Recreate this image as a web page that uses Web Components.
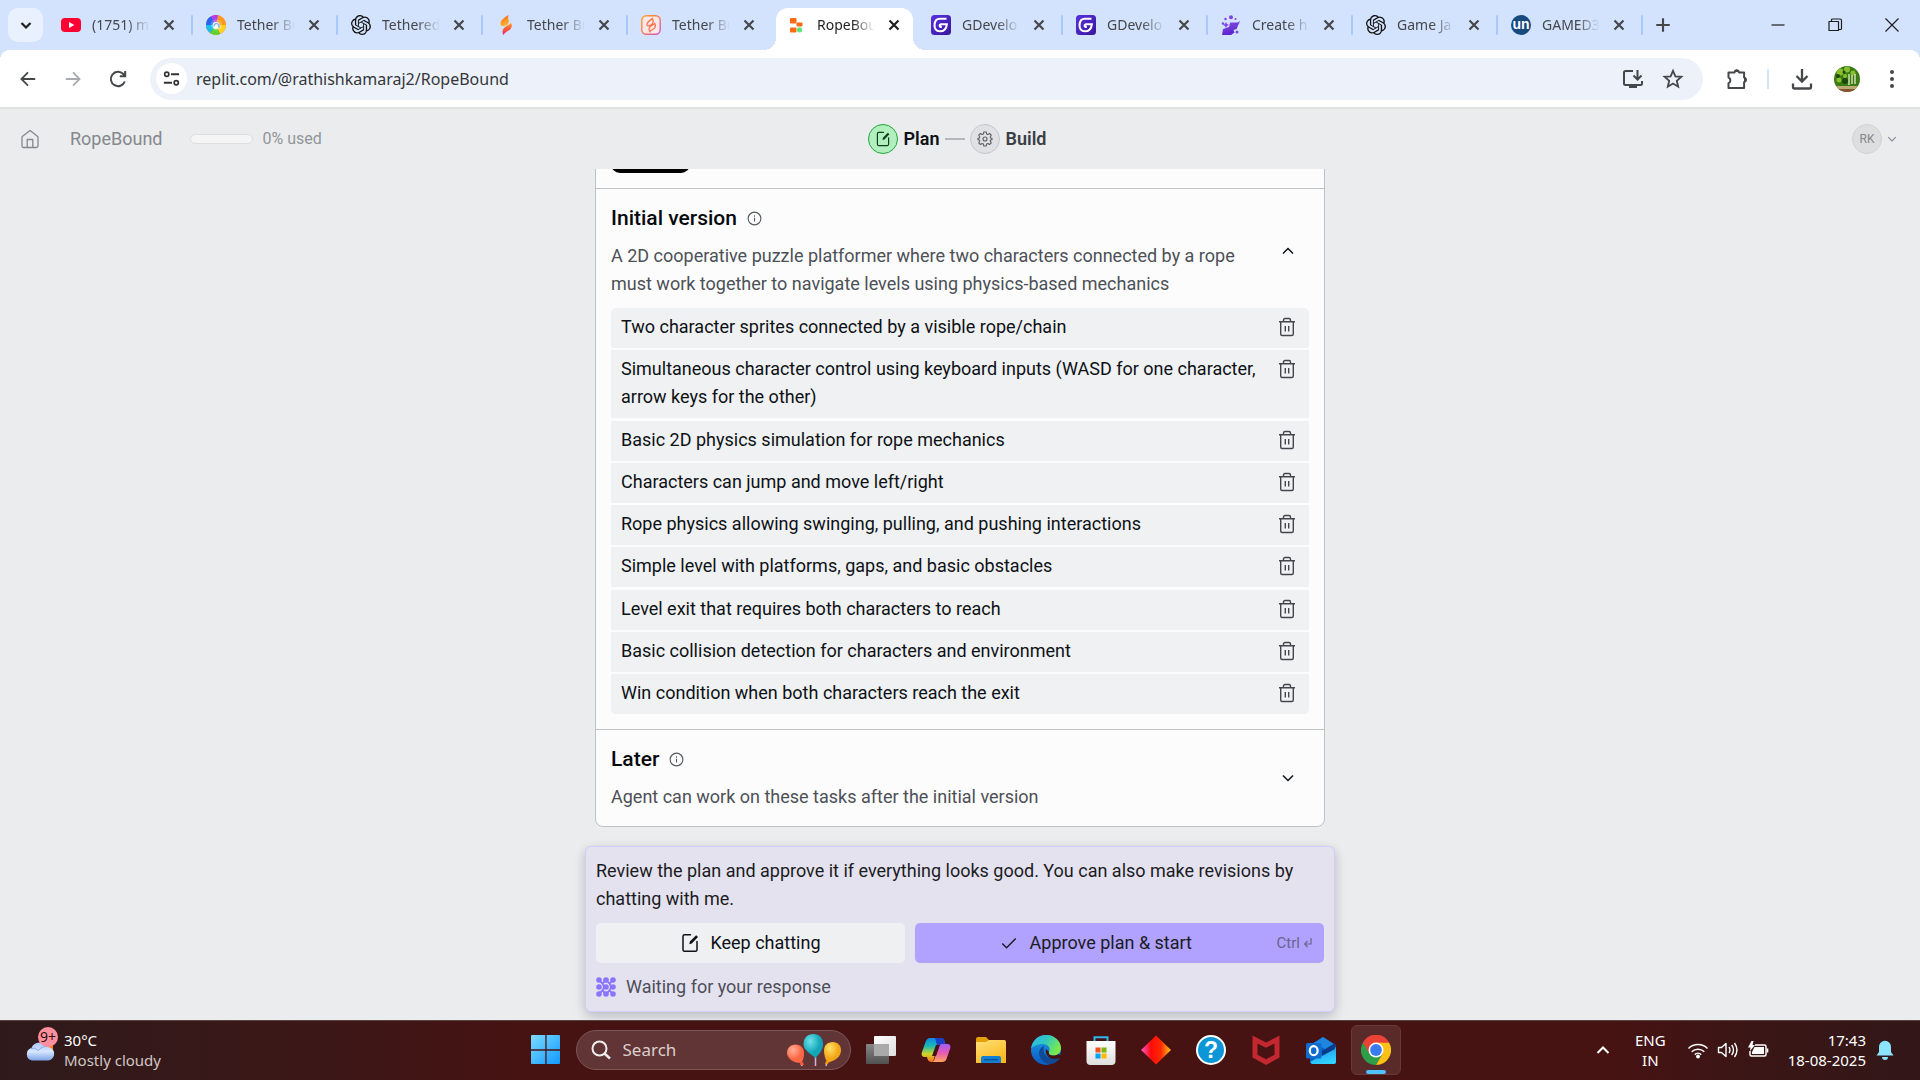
<!DOCTYPE html>
<html lang="en">
<head>
<meta charset="utf-8">
<title>RopeBound</title>
<style>
html,body{margin:0;height:100%;overflow:hidden}
body{--ui:"Noto Sans","Open Sans",sans-serif;--app:"Roboto","Noto Sans",sans-serif;font-family:var(--app);color:#0e1116;background:#eaecee}
</style>
</head>
<body>
<desktop-screen></desktop-screen>
<script>
const BASE = `*{box-sizing:border-box}button{font:inherit;color:inherit;background:none;border:0;padding:0;margin:0;cursor:pointer}
:host{display:block}button{display:flex;align-items:center;justify-content:center}input{font:inherit;border:0;outline:0;background:none;padding:0;min-width:0}`;
function define(name, html, css, setup) {
  const template = document.createElement('template');
  template.innerHTML = `<style>${BASE}${css}</style>${html}`;
  customElements.define(name, class extends HTMLElement {
    constructor() {
      super();
      this.attachShadow({ mode: 'open' }).append(template.content.cloneNode(true));
    }
    connectedCallback() { if (setup) setup(this, this.shadowRoot); }
  });
}

const openai = `<path fill="#111" d="M22.2819 9.8211a5.9847 5.9847 0 0 0-.5157-4.9108 6.0462 6.0462 0 0 0-6.5098-2.9A6.0651 6.0651 0 0 0 4.9807 4.1818a5.9847 5.9847 0 0 0-3.9977 2.9 6.0462 6.0462 0 0 0 .7427 7.0966 5.98 5.98 0 0 0 .511 4.9107 6.051 6.051 0 0 0 6.5146 2.9001A5.9847 5.9847 0 0 0 13.2599 24a6.0557 6.0557 0 0 0 5.7718-4.2058 5.9894 5.9894 0 0 0 3.9977-2.9001 6.0557 6.0557 0 0 0-.7475-7.0729zm-9.022 12.6081a4.4755 4.4755 0 0 1-2.8764-1.0408l.1419-.0804 4.7783-2.7582a.7948.7948 0 0 0 .3927-.6813v-6.7369l2.02 1.1686a.071.071 0 0 1 .038.052v5.5826a4.504 4.504 0 0 1-4.4945 4.4944zm-9.6607-4.1254a4.4708 4.4708 0 0 1-.5346-3.0137l.142.0852 4.783 2.7582a.7712.7712 0 0 0 .7806 0l5.8428-3.3685v2.3324a.0804.0804 0 0 1-.0332.0615L9.74 19.9502a4.4992 4.4992 0 0 1-6.1408-1.6464zM2.3408 7.8956a4.485 4.485 0 0 1 2.3655-1.9728V11.6a.7664.7664 0 0 0 .3879.6765l5.8144 3.3543-2.0201 1.1685a.0757.0757 0 0 1-.071 0l-4.8303-2.7865A4.504 4.504 0 0 1 2.3408 7.872zm16.5963 3.8558L13.1038 8.364 15.1192 7.2a.0757.0757 0 0 1 .071 0l4.8303 2.7913a4.4944 4.4944 0 0 1-.6765 8.1042v-5.6772a.79.79 0 0 0-.407-.667zm2.0107-3.0231l-.142-.0852-4.7735-2.7818a.7759.7759 0 0 0-.7854 0L9.409 9.2297V6.8974a.0662.0662 0 0 1 .0284-.0615l4.8303-2.7866a4.4992 4.4992 0 0 1 6.6802 4.66zM8.3065 12.863l-2.02-1.1638a.0804.0804 0 0 1-.038-.0567V6.0742a4.4992 4.4992 0 0 1 7.3757-3.4537l-.142.0805L8.704 5.459a.7948.7948 0 0 0-.3927.6813zm1.0976-2.3654l2.602-1.4998 2.6069 1.4998v2.9994l-2.5974 1.4997-2.6067-1.4997Z"/>`;
const line = (d, w = 2, extra = '') => `<path d="${d}" fill="none" stroke="currentColor" stroke-width="${w}" ${extra}/>`;
const grad = (id, stops, x2 = 0, y2 = 1) => `<linearGradient id="${id}" x1="0" y1="0" x2="${x2}" y2="${y2}">${stops.map((c, i) => `<stop offset="${i / (stops.length - 1)}" stop-color="${c}"/>`).join('')}</linearGradient>`;

/* name: [viewBox width, viewBox height, markup] */
const ICONS = {
  youtube: [20, 20, `<rect y="3" width="20" height="14" rx="4" fill="#ff0033"/><path d="M8 7l5.400 3L8 13z" fill="#fff"/>`],
  swirl: [20, 20, `<circle cx="10" cy="10" r="10" fill="#f54"/><path d="M10 0a10 10 0 0 1 10 10h-10z" fill="#ff9a1c"/><path d="M20 10a10 10 0 0 1-6 9L10 10z" fill="#ffd21f"/><path d="M14 19a10 10 0 0 1-10-1l6-8z" fill="#5ed32c"/><path d="M4 18a10 10 0 0 1-4-9l10 1z" fill="#19bfe8"/><path d="M0 10A10 10 0 0 1 5 1.300L10 10z" fill="#2563f5"/><path d="M5 1.300A10 10 0 0 1 12 .2L10 10z" fill="#b13cf2"/><path d="M5 7A6.500 6.500 0 0 1 14.500 6a6 6 0 0 1-2 9.500A6.500 6.500 0 0 1 5 7z" fill="#fff" opacity=".22"/><circle cx="10" cy="10.500" r="3.400" fill="#fff"/><path d="M8 11.500a2.500 2.500 0 1 1 4.500 1" stroke="#79b8ff" fill="none" stroke-width="1.400"/>`],
  openai: [24, 24, openai],
  flame: [20, 20, `<defs>${grad('g', ['#ff3b2f', '#ff8a1e', '#ffb12e'], .3, 1)}${grad('h', ['#ff9d1c', '#ff5a3c', '#f01f7a'], 0, 1)}</defs><path d="M12.500 0C8 2.500 4 6 4.500 9c.3 2.500 2.500 2.500 5.500 1.500 3-1.200 3-4 2.500-5.500-.4-1.600-.7-3.200 0-5z" fill="url(#g)"/><path d="M7.500 20c-1.500-2-1.500-5 1-7.500 2-2 5-2.500 6.500-4.500 1.500 2 1 5-1.500 7-2.500 1.500-5 2.500-6 5z" fill="url(#h)"/>`],
  flameBox: [20, 20, `<defs>${grad('g', ['#ffa02c', '#ff7550', '#d152d0'], 1, 1)}</defs><rect x=".8" y=".8" width="18.400" height="18.400" rx="4.500" fill="#fbe9e7" stroke="url(#g)" stroke-width="1.400"/><path d="M11.500 3.500C8 6 5.500 7.500 6 10c.5 1.500 3 .5 4.500-.3 1.800-1 2-3.500 1-6.200zM9 16.800c-2-2.500-.7-5 1.200-6 1.500-.8 3-1.300 3.600-2.300 1 2 .5 4-1 5.300-1.500 1-3.200 1.500-3.800 3z" fill="none" stroke="#f8744d" stroke-width="1.300"/>`],
  replit: [20, 20, `<g fill="#fd6a13"><rect x="4" y="3" width="6.500" height="5.500" rx="1"/><rect x="10.500" y="7.500" width="6" height="4" rx="1"/><rect x="4" y="12.500" width="6.500" height="5" rx="1"/></g><circle cx="13.500" cy="14.800" r="2.600" fill="#5be37d"/>`],
  gdevelop: [20, 20, `<defs>${grad('g', ['#5a31e2', '#38159a'], 1, 1)}</defs><rect width="20" height="20" rx="3.500" fill="url(#g)"/><path d="M15.500 3.800H8.800C5.800 3.800 4 6 3.600 9c-.6 4.500 1.500 7.300 5.400 7.300 3.700 0 6.300-2.300 6.800-7H10c-1.600 0-2.200 2.600.8 2.600" fill="none" stroke="#fff" stroke-width="2.100"/>`],
  wizard: [20, 20, `<defs>${grad('g', ['#8b52ee', '#5a22c8'], .4, 1)}</defs><path d="M1 20l1-6 6-2 1-4.500h7.500L19 6l-3.500 8-3 1 1 2.500L10 20z" fill="url(#g)"/><g fill="#7d43e8"><circle cx="10" cy="2.200" r="2"/><circle cx="4.500" cy="4" r="1.200"/><circle cx="14.500" cy="4" r="1"/><circle cx="2" cy="8.500" r="1.300"/><circle cx="16" cy="17" r="1.500"/><path d="M5 7l1 2 2 1-2 1-1 2-1-2-2-1 2-1z"/></g>`],
  un: [20, 20, `<circle cx="10" cy="10" r="10" fill="#174a7e"/><text x="10" y="14" text-anchor="middle" font-family="Liberation Sans,sans-serif" font-weight="700" font-size="14" fill="#fff">un</text>`],
  close: [16, 16, line('M4 4l8 8M12 4l-8 8', 1.900)],
  plus: [16, 16, line('M8 2v12M2 8h12', 1.900)],
  down: [16, 16, line('M3.500 6L8 10.500 12.500 6', 2.200)],
  chevDown: [16, 16, line('M3 5.500l5 5 5-5', 1.500)],
  chevUp: [16, 16, line('M3 10.500l5-5 5 5', 1.500)],
  minimize: [16, 16, line('M1.500 8h13', 1.200)],
  restore: [16, 16, line('M2 4.500h9.500v9H2zM4.500 4V3q0-1 1-1h7.500q1.500 0 1.500 1.500v8q0 1-1 1h-1.500', 1.200, 'stroke-linejoin="round"')],
  winclose: [16, 16, line('M1.500 1.500l13 13M14.500 1.500l-13 13', 1.200)],
  back: [20, 20, line('M18 10H3M10 2.700L2.700 10l7.300 7.300', 2)],
  forward: [20, 20, line('M2 10h15M10 2.700l7.300 7.300-7.300 7.300', 2)],
  reload: [20, 20, line('M16.800 12.500A7.200 7.200 0 1 1 15.300 5L17 6.800M17.200 2v5.300h-5.400', 2)],
  tune: [20, 20, line('M9.500 5.500H18M2 14.500h8.500', 2) + `<circle cx="5" cy="5.500" r="2.200" fill="none" stroke="currentColor" stroke-width="1.800"/><circle cx="15" cy="14.500" r="2.200" fill="none" stroke="currentColor" stroke-width="1.800"/>`],
  install: [22, 22, line('M11 3H3.500Q2 3 2 4.500v11Q2 17 3.500 17h15q1.500 0 1.500-1.500V13M15.500 2v9M11.500 7.500l4 4 4-4', 2) + `<path d="M7 17h8v3H7z" fill="currentColor"/>`],
  star: [22, 22, line('M11 2.800l2.400 5.500 6 .5-4.600 4 1.400 5.900-5.200-3.200-5.200 3.200 1.400-5.900-4.600-4 6-.5z', 1.800)],
  puzzle: [24, 24, `<path d="M3.500 5.500h6a2.400 2.400 0 0 1 4.600 0h5v5a2.400 2.400 0 0 1 0 4.600v6H3.500v-5a3 3 0 0 0 0-5.600z" fill="none" stroke="currentColor" stroke-width="2" stroke-linejoin="round"/><path d="M9 5a2.700 2.700 0 0 1 5.400 0zM19 10a2.700 2.700 0 0 1 0 5.400z" fill="currentColor"/>`],
  download: [24, 24, line('M12 2v12M6.500 9l5.500 5.500L17.500 9M3 16.500V20q0 1.500 1.500 1.500h15Q21 21.500 21 20v-3.500', 2.300)],
  avatar: [26, 26, `<defs><clipPath id="c"><circle cx="13" cy="13" r="13"/></clipPath></defs><g clip-path="url(#c)"><path fill="#3b7a14" d="M0 0h26v26H0z"/><g fill="#89bf2c"><circle cx="6" cy="6" r="3.500"/><circle cx="13" cy="3.500" r="3"/><circle cx="19" cy="7" r="2.500"/><circle cx="5" cy="14" r="2.500"/><circle cx="11" cy="10" r="2"/></g><g fill="#1c480d"><circle cx="10" cy="6" r="1.500"/><circle cx="4" cy="10" r="2"/><circle cx="11" cy="15" r="3"/></g><path d="M15 8v11M18 9v9M21 8v10" stroke="#dbe8b9" stroke-width="1.400"/><path d="M2 20h24v3H2z" fill="#bcab76"/><path d="M4 23h18v4H4z" fill="#86552e"/></g>`],
  dots: [20, 20, `<g fill="currentColor"><circle cx="10" cy="3" r="2"/><circle cx="10" cy="10" r="2"/><circle cx="10" cy="17" r="2"/></g>`],
  home: [20, 20, line('M2 8.500Q2 7.800 2.600 7.200L10 1.500l7.400 5.700q.6.600.6 1.300V17q0 1.500-1.500 1.500h-13Q2 18.500 2 17zM7.200 18.500v-8h5.600v8', 1.300, 'stroke-linejoin="round"')],
  edit: [20, 20, line('M10.500 1.800H4.500q-1.500 0-1.500 1.500v13.400q0 1.500 1.500 1.500h11q1.500 0 1.500-1.500V8.500', 1.500, 'stroke-linecap="round"') + `<path d="M9.300 11.200l.6-2.800 6.200-6.200 1.900 1.900-6.200 6.500z" fill="currentColor"/>`],
  gear: [20, 20, line('M8.500 1.300h3l.5 2.400 1.500.7 2.200-1.300 2.100 2.100-1.300 2.200.6 1.500 1.600.1v2l-1.600.1-.6 1.500 1.300 2.200-2.100 2.100-2.200-1.300-1.500.7-.5 2.400h-3L8 16.300l-1.500-.7-2.200 1.300-2.100-2.100 1.300-2.200-.7-1.500-1.600-.1V9l1.600-.1.7-1.500-1.300-2.200 2.100-2.100 2.200 1.300L8 3.700z', 1.400, 'stroke-linejoin="round"') + `<circle cx="10" cy="10" r="2.500" fill="none" stroke="currentColor" stroke-width="1.400"/>`],
  info: [16, 16, `<circle cx="8" cy="8" r="6.800" fill="none" stroke="currentColor" stroke-width="1.200"/>` + line('M8 7.200v4M8 4.600v1.400', 1.200)],
  trash: [20, 20, line('M2 4.800h16M6.500 4.800V3q0-1.500 1.500-1.500h4q1.500 0 1.500 1.500v1.800M3.700 4.800V17q0 1.500 1.500 1.500h9.600q1.500 0 1.500-1.500V4.800M8.300 9v5.500M11.700 9v5.500', 1.400)],
  check: [20, 20, line('M2.500 10.500l4.800 4.800L17.500 5', 1.600)],
  enter: [10, 12, line('M8 1v6H2M4.500 4L1.700 7l2.800 3', 1.200)],
  agent: [20, 20, `<g fill="#8b74ff">${[3, 10, 17].map(x => [3, 10, 17].map(y => `<circle cx="${x}" cy="${y}" r="2.800"/>`).join('')).join('')}</g><path d="M3 3l3.500 3.500L8 10l-1.500 3.500L3 17M10 3l3.500 3.500L15 10l-1.500 3.500L10 17M10 3L6.500 6.500M10 17l-3.500-3.500M17 3l-3 3M17 17l-3-3" stroke="#8b74ff" stroke-width="1.800" fill="none"/>`],
  cloud: [30, 20, `<defs>${grad('g', ['#a9c8fa', '#d7e7ff', '#7ea4e8'])}</defs><path d="M21 4h7v7h-7z" fill="#ff7a18"/><path d="M7 19.500a6.500 6.500 0 0 1-.5-12.600A9 9 0 0 1 22.500 6 6.800 6.800 0 0 1 23.500 19.500z" fill="url(#g)"/><path d="M5 7.500q5-1.500 8.500 2 3-4.500 9-4" fill="none" stroke="#84a8e8"/>`],
  start: [30, 30, `<defs>${grad('g', ['#7ddcff', '#1099ff'], 1, 1)}</defs><path fill="url(#g)" d="M0 1q0-1 1-1h13.300v14.300H0zM15.600 0H28q1 0 1 1v13.300H15.600zM0 15.700h14.300V29H1q-1 0-1-1zM15.600 15.700H29V28q0 1-1 1H15.600z"/>`],
  search: [20, 20, `<circle cx="8.500" cy="8.500" r="7" fill="none" stroke="currentColor" stroke-width="2"/>` + line('M13.500 13.500l5.500 5', 2.400)],
  balloons: [56, 34, `<defs><radialGradient id="a" cx=".35" cy=".3"><stop offset="0" stop-color="#ffb09a"/><stop offset="1" stop-color="#ff6844"/></radialGradient><radialGradient id="b" cx=".35" cy=".3"><stop offset="0" stop-color="#6fe3ea"/><stop offset="1" stop-color="#12a5b8"/></radialGradient><radialGradient id="d" cx=".35" cy=".3"><stop offset="0" stop-color="#ffe268"/><stop offset="1" stop-color="#f4a618"/></radialGradient></defs><path d="M29.500 24v9M15 29l1 4M41 29l-1 4" stroke="#d0b4d8" stroke-width="1.500"/><path d="M1 20c0-5 3.500-8.500 8.500-8.500S18 15 18 20c0 4-1 8-3 10C7 30 1 25 1 20z" fill="url(#a)"/><path d="M17.500 11.500C17.500 5 21.500 1 27.500 1S37 5 37 11.500c0 6-5 10.500-7.500 13.500-3-3-12-7.500-12-13.500z" fill="url(#b)"/><path d="M38 17.500c0-5 3.500-8.500 8.700-8.500S55 12.500 55 17.500C55 24 48 28.500 41.500 29.500 39 26 38 21.500 38 17.500z" fill="url(#d)"/><path d="M14 29h3l1 3h-4z" fill="#f05a38"/><path d="M40 28h3l-1 3h-3z" fill="#e89a10"/>`],
  taskview: [30, 30, `<defs>${grad('g', ['#fff', '#ddd'], 1, 1)}${grad('h', ['#888', '#505050'])}</defs><rect y="9" width="23" height="20" rx="1" fill="url(#h)"/><rect x="8" y="1" width="22" height="20" rx="1" fill="url(#g)"/><path d="M8 9h15v12H8z" fill="#aaa"/>`],
  copilot: [30, 30, `<defs>${grad('g', ['#1287e8', '#18b9b5', '#d0d824', '#ff6a22'])}${grad('h', ['#a35df8', '#e85bb2', '#ffa45c'])}</defs><path d="M9 3h11q2.500 0 3.500 3l1 3h-5q-2 0-3 3l-4 13q-.7 2-2 2-3 0-4-3l-.5-2H4c-3 0-4-2-3-5L4.500 7Q6 3 9 3z" fill="url(#g)"/><path d="M14 3h6q2.500 0 3.500 3l1 3h-5q-2 0-3 3z" fill="#1b3fc8"/><path d="M21 27H11q2-1 2.500-3l4-12q1-3 3.500-3h5c3 0 4 2 3 5l-3.500 10q-1 3-4.500 3z" fill="url(#h)"/><path d="M15 10h4l-4 11h-4z" fill="#461212"/>`],
  folder: [30, 30, `<defs>${grad('g', ['#ffe07a', '#fbb91f'], .6, 1)}</defs><path d="M0 4q0-2 2-2h8l3 3h16v8H0z" fill="#e3a008"/><path d="M0 7h10l3-2h15q2 0 2 2v21H0z" fill="url(#g)"/><path d="M5 28v-5q0-2 2-2h16q2 0 2 2v5z" fill="#1180d4"/><path d="M8 24.700h14" stroke="#0a4f94" stroke-width="1.300"/>`],
  edge: [30, 30, `<defs>${grad('g', ['#2bb3ee', '#32c8c0', '#7bea4a'], 1, .5)}${grad('h', ['#1b9de8', '#0c59c0'])}</defs><circle cx="15" cy="15" r="15" fill="url(#h)"/><path d="M0 13.500C1.500 5 7.500 0 15 0c9 0 15 6.500 15 13 0 4.500-3 7.500-7.500 7.500-3.500 0-5.500-1.500-4.500-3.500 2-4-1-8-6-8-5 0-9 1.500-12 4.500z" fill="url(#g)"/><path d="M13 11c-5 2-6 7-4 11 2 5 8 8.500 14 6.200 3-1.200 5-3.500 6-5.700-5 2.500-12 1.500-15-3-2-3-1.500-6-1-8.500z" fill="#104a96"/><path d="M18 17c-1 2 1 3.500 4.500 3.500 2.500 0 4-.6 5.500-1.800l2 4-1.500.3C20 26 13.500 21 15 14z" fill="#461212"/>`],
  store: [30, 30, `<defs>${grad('g', ['#fff', '#dedede'])}</defs><path d="M8.500 7V2.200h13V7" fill="none" stroke="#2db5ec" stroke-width="2"/><path d="M.5 6h29v20q0 4-4 4h-21q-4 0-4-4z" fill="url(#g)"/><path d="M9.500 12.500h5v5h-5z" fill="#f25022"/><path d="M15.500 12.500h5v5h-5z" fill="#7fba00"/><path d="M9.500 18.500h5v5h-5z" fill="#00a4ef"/><path d="M15.500 18.500h5v5h-5z" fill="#ffb900"/>`],
  diamond: [30, 30, `<defs>${grad('g', ['#ff5ad0', '#ff0a0a', '#ff2a00', '#ffc81e'], 1, 0)}</defs><path d="M15 .5L30 15 15 29.500 0 15z" fill="url(#g)"/>`],
  help: [30, 30, `<circle cx="15" cy="15" r="14" fill="#0b96d8" stroke="#fff" stroke-width="2"/><text x="15" y="23" text-anchor="middle" font-family="Liberation Sans,sans-serif" font-weight="700" font-size="23" fill="#fff">?</text>`],
  mcafee: [30, 30, `<path fill-rule="evenodd" fill="#c3272f" d="M1.500.5L15 7.500 28.500.5v22L15 30 1.500 22.500zM6.500 8.500v11.300L15 24.300l8.500-4.500V8.500L15 12.800z"/>`],
  outlook: [30, 30, `<defs>${grad('g', ['#1e8ee8', '#30d0ff'], .4, 1)}</defs><path d="M4 10L17 2l12.500 8v17q0 2-2 2H7q-3 0-3-3z" fill="#0a5cbf"/><path d="M17 2l12.500 8-9 5L8 8z" fill="#1e84dd"/><path d="M4 27L30 12v15q0 2-2 2H6z" fill="url(#g)"/><path d="M16 16l13-8v6L16 21z" fill="#083c8c"/><rect y="8" width="15.500" height="15.500" rx="1.500" fill="#0f6cd0"/><ellipse cx="7.700" cy="15.700" rx="3.900" ry="4.500" fill="none" stroke="#fff" stroke-width="2.200"/>`],
  chrome: [30, 30, `<path d="M15 15L2 7.500A15 15 0 0 1 28 7.500z" fill="#ea4335"/><path d="M15 15L2 7.500A15 15 0 0 0 15 30l6.500-11z" fill="#2f9e48"/><path d="M15 7.500h13A15 15 0 0 1 15 30l6.500-11.300z" fill="#fbc116"/><path d="M2 7.500L8.500 18.800 15 7.500h13A15 15 0 0 0 2 7.500z" fill="#ea4335"/><circle cx="15" cy="15" r="7.500" fill="#fff"/><circle cx="15" cy="15" r="5.900" fill="#3a7cf0"/>`],
  trayUp: [16, 16, line('M2.500 11L8 5.500 13.500 11', 2)],
  wifi: [22, 18, line('M1.500 7.500a13.500 13.500 0 0 1 19 0M4.700 10.700a9 9 0 0 1 12.600 0M7.800 13.600a4.600 4.600 0 0 1 6.400 0', 1.500) + `<circle cx="11" cy="15.500" r="1.900" fill="currentColor"/>`],
  volume: [22, 18, line('M1.500 6.500h3L9 2.500v13l-4.500-4h-3zM12 6q2 3 0 6M14.700 4q3.600 5 0 10M17.500 2q5 7 0 14', 1.400, 'stroke-linejoin="round"')],
  battery: [22, 18, line('M8 4h9.500q1.500 0 1.500 1.500v8q0 1.500-1.500 1.500H4.500Q3 15 3 13.500V10', 1.500) + `<path d="M7.500 6H17v7H5v-2zM19.800 7.500h1.500v4h-1.500zM4.500 0L1 6.500h2.500L3 10l5-6H5.500l1-4z" fill="currentColor"/>`],
  bell: [18, 20, `<path d="M9 .8a6 6 0 0 1 6 6V12l2.500 3.500H.5L3 12V6.800a6 6 0 0 1 6-6zM6 17h6a3 3 0 0 1-6 0z" fill="#8be6fd"/>`],
};
customElements.define('app-icon', class extends HTMLElement {
  static observedAttributes = ['name'];
  constructor() { super(); this.attachShadow({ mode: 'open' }); }
  attributeChangedCallback() { this.draw(); }
  connectedCallback() { this.draw(); }
  draw() {
    const icon = ICONS[this.getAttribute('name')];
    if (!icon) return;
    const [w, h, body] = icon;
    const width = +this.getAttribute('size') || w;
    this.shadowRoot.innerHTML = `<style>:host{display:inline-block;flex:none;line-height:0}</style>
      <svg width="${width}" height="${Math.round(width * h / w)}" viewBox="0 0 ${w} ${h}" aria-hidden="true">${body}</svg>`;
  }
});

define('browser-tab', `
  <div class="tab"><app-icon size="20"></app-icon><span class="title"><slot></slot></span>
  <button aria-label="Close tab"><app-icon name="close" size="18"></app-icon></button><i></i></div>`, `
  :host{flex:0 1 145px;height:42px;min-width:0;color:#45474a;font:14px/20px var(--ui)}
  .tab{height:34px;display:flex;align-items:center;padding-left:13px}
  :host{position:relative}
  .title{margin-left:11px;flex:1;overflow:hidden;white-space:nowrap;mask-image:linear-gradient(90deg,#000 60%,transparent)}
  button{width:20px;height:20px;margin:0 12px 0 9px}
  i{width:2px;height:20px;background:#a8c7fa;border-radius:1px}
  :host([plain]) i{visibility:hidden}
  :host([active]){color:#1f1f1f}
  :host([active])::before{content:"";position:absolute;inset:0 5px 0 3px;background:#fff;border-radius:12px 12px 0 0;z-index:-1}
  :host([active])::after{content:"";position:absolute;left:-9px;right:-7px;bottom:0;height:12px;z-index:-1;
    background:radial-gradient(circle at 0 0,transparent 12px,#fff 12px) left/12px 12px no-repeat,radial-gradient(circle at 100% 0,transparent 12px,#fff 12px) right/12px 12px no-repeat}`,
  (host, root) => root.querySelector('app-icon').setAttribute('name', host.getAttribute('icon')));

define('tab-strip', `
  <button class="list" aria-label="Search tabs"><app-icon name="down" size="16"></app-icon></button>
  <nav>
    <browser-tab icon="youtube">(1751) m</browser-tab><browser-tab icon="swirl">Tether Bu</browser-tab>
    <browser-tab icon="openai">Tethered</browser-tab><browser-tab icon="flame">Tether Bu</browser-tab>
    <browser-tab icon="flameBox" plain>Tether Bu</browser-tab><browser-tab icon="replit" active plain>RopeBou</browser-tab>
    <browser-tab icon="gdevelop">GDevelo</browser-tab><browser-tab icon="gdevelop">GDevelo</browser-tab>
    <browser-tab icon="wizard">Create h</browser-tab><browser-tab icon="openai">Game Ja</browser-tab>
    <browser-tab icon="un">GAMED3</browser-tab>
  </nav>
  <button class="new" aria-label="New tab"><app-icon name="plus" size="18"></app-icon></button>
  <div class="win"><button aria-label="Minimize"><app-icon name="minimize" size="16"></app-icon></button><button aria-label="Restore"><app-icon name="restore" size="16"></app-icon></button><button aria-label="Close"><app-icon name="winclose" size="16"></app-icon></button></div>`, `
  :host{display:flex;height:50px;background:#d3e3fd;align-items:flex-start;padding-top:8px;color:#1f1f1f;isolation:isolate}
  .list{width:35px;height:34px;border-radius:10px;background:#e9f1fe;margin:0 5px 0 8px;flex:none}
  nav{display:flex;min-width:0;flex:0 1 1595px}
  .new{width:40px;height:34px;color:#45474a;flex:none}
  .win{display:flex;margin-left:auto;height:34px}.win button{width:57px}`);

define('tool-bar', `
  <button class="nav" aria-label="Back"><app-icon name="back" size="18"></app-icon></button>
  <button class="nav off" aria-label="Forward"><app-icon name="forward" size="18"></app-icon></button>
  <button class="nav" aria-label="Reload"><app-icon name="reload" size="20"></app-icon></button>
  <form><button type="button" class="site" aria-label="Site information"><app-icon name="tune" size="19"></app-icon></button>
  <input aria-label="Address" value="replit.com/@rathishkamaraj2/RopeBound">
  <button type="button" aria-label="Install"><app-icon name="install" size="22"></app-icon></button><button type="button" aria-label="Bookmark"><app-icon name="star" size="22"></app-icon></button></form>
  <button class="act" aria-label="Extensions"><app-icon name="puzzle" size="24"></app-icon></button><i></i>
  <button class="act" aria-label="Downloads"><app-icon name="download" size="24"></app-icon></button>
  <button class="act" aria-label="Profile"><app-icon name="avatar" size="26"></app-icon></button>
  <button class="act" aria-label="Menu"><app-icon name="dots" size="20"></app-icon></button>`, `
  :host{display:flex;align-items:center;height:59px;border-bottom:2px solid #dfe2de;padding:0 6px 0 5px;color:#45474a;
    background:radial-gradient(circle at 100% 100%,#fff 10px,#d3e3fd 10px) left top/10px 10px no-repeat,radial-gradient(circle at 0 100%,#fff 10px,#d3e3fd 10px) right top/10px 10px no-repeat,#fff}
  .nav{width:45px;height:40px}.off{color:#a9abae}
  form{flex:1;height:42px;display:flex;align-items:center;background:#ecf1fa;border-radius:21px;margin:0 11px 0 10px;padding:0 10px 0 6px}
  .site{width:31px;height:31px;border-radius:50%;background:#fff;margin-right:9px;color:#333}
  input{flex:1;font:16px/24px var(--ui);color:#35373a}
  form button:not(.site){width:40px;height:40px}
  .act{width:45px;height:40px}i{width:2px;height:20px;background:#d3e3fd;margin:0 10px 0 8px}`);

define('workspace-header', `
  <div class="side"><button aria-label="Home"><app-icon name="home" size="20"></app-icon></button><a href="#">RopeBound</a>
    <span class="bar" role="progressbar" aria-label="Usage" aria-valuenow="0"></span><small>0% used</small></div>
  <ol><li><span class="dot on"><app-icon name="edit" size="16"></app-icon></span><b>Plan</b></li><li class="dash"></li>
    <li><span class="dot"><app-icon name="gear" size="16"></app-icon></span><b class="later">Build</b></li></ol>
  <div class="side end"><button class="user" aria-label="Account"><span>RK</span><app-icon name="chevDown" size="12"></app-icon></button></div>`, `
  :host{display:flex;align-items:center;height:60px;padding:0 22px 0 20px;flex:none}
  .side{flex:1;display:flex;align-items:center;color:#85888c}
  .side>button{color:#85888c}
  a{color:inherit;text-decoration:none;font-size:18px;line-height:24px;margin:0 27px 0 30px}
  .bar{width:63px;height:10px;border-radius:5px;background:#f4f5f4;border:1px solid #dcdedf}
  small{font-size:16px;line-height:20px;margin-left:10px;color:#929599}
  ol{display:flex;align-items:center;list-style:none;margin:0 4px 0 0;padding:0}
  li{display:flex;align-items:center;gap:6px}
  b{font-size:18px;line-height:24px;font-weight:600}.later{color:#3b3f45}
  .dash{width:20px;height:2px;background:#b4b7ba;margin:0 5px}
  .dot{width:30px;height:30px;border-radius:50%;display:flex;align-items:center;justify-content:center;background:#dfe1e2;border:1px solid #c4c7ca;color:#5c6066}
  .on{background:#b2efbe;border-color:#22a63a;color:#10401b}
  .end{justify-content:flex-end}.user{gap:4px;color:#a2a5a8}
  .user span{width:30px;height:30px;border-radius:50%;background:#dcdedf;border:1px solid #d1d3d5;font-size:12px;line-height:28px}`);

define('task-row', `<span><slot></slot></span><button aria-label="Delete task"><app-icon name="trash" size="20"></app-icon></button>`, `
  :host{display:flex;align-items:flex-start;background:#eff1f2;padding:5px 11px 7px 10px;font-size:18px;line-height:28px;color:#0e1116}
  :host(:first-of-type){border-radius:5px 5px 0 0}:host(:last-of-type){border-radius:0 0 5px 5px}
  span{flex:1}button{width:22px;height:28px;color:#43474d;margin-left:20px}`);

define('plan-section', `
  <header><div><h2><slot name="title"></slot><app-icon name="info" size="15"></app-icon></h2><p><slot name="about"></slot></p></div>
  <button aria-label="Toggle section"><app-icon size="16"></app-icon></button></header>
  <div class="list"><slot></slot></div>`, `
  :host{border-top:1px solid #bfc2c5;padding:15px}
  header{display:flex;align-items:center}header>div{flex:1}
  h2{margin:0;display:flex;align-items:center;gap:10px;font-size:21px;line-height:28px;font-weight:500;color:#07090c}h2 app-icon{color:#565a60}
  p{margin:10px 0 0;font-size:18px;line-height:28px;color:#4c5057}
  button{width:30px;height:30px;margin:0 6px 0 30px}
  .list{display:flex;flex-direction:column;justify-content:space-between}
  :host([open]) .list{margin-top:10px;min-height:406px}
  `, (host, root) => root.querySelector('button app-icon').setAttribute('name', host.hasAttribute('open') ? 'chevUp' : 'chevDown'));

define('plan-card', `<div class="above"><button aria-label="Selected option"></button></div><slot></slot>`, `
  :host{background:#fcfcfc;border:1px solid #bfc2c5;border-radius:8px;width:730px;max-width:100%;flex:none}
  .above{padding:8px 15px 15px}.above button{width:79px;height:40px;border-radius:9px;background:#000}`);

define('review-prompt', `
  <p>Review the plan and approve it if everything looks good. You can also make revisions by chatting with me.</p>
  <div class="row"><button class="keep"><app-icon name="edit" size="20"></app-icon>Keep chatting</button>
  <button class="go"><span><app-icon name="check" size="18"></app-icon>Approve plan &amp; start</span><kbd>Ctrl<app-icon name="enter" size="10"></app-icon></kbd></button></div>
  <div class="wait"><app-icon name="agent" size="20"></app-icon>Waiting for your response</div>`, `
  :host{width:750px;max-width:100%;flex:none;background:#e5e2f0;border:1px solid #d4cbff;border-radius:6px;padding:10px;font-size:18px;line-height:28px;box-shadow:0 4px 12px rgba(10,10,30,.22);color:#1b1c22}
  p{margin:0 0 10px}.row{display:flex;gap:10px}
  button{height:40px;border-radius:5px}
  .keep{flex:309;background:#eff0f2;gap:10px;color:#0e1116}
  .go{flex:409;background:#b1a2ff}.go span{flex:1;display:flex;align-items:center;justify-content:center;gap:12px}
  kbd{font:15px/20px var(--app);color:#6c638e;display:flex;align-items:center;gap:3px;margin-right:11px}
  .wait{display:flex;align-items:center;gap:10px;margin-top:10px;color:#4c4e58}`);

define('workspace-page', `
  <workspace-header></workspace-header>
  <div class="scroll"><plan-card>
    <plan-section open><span slot="title">Initial version</span><span slot="about">A 2D cooperative puzzle platformer where two characters connected by a rope must work together to navigate levels using physics-based mechanics</span>
      <task-row>Two character sprites connected by a visible rope/chain</task-row>
      <task-row>Simultaneous character control using keyboard inputs (WASD for one character, arrow keys for the other)</task-row>
      <task-row>Basic 2D physics simulation for rope mechanics</task-row>
      <task-row>Characters can jump and move left/right</task-row>
      <task-row>Rope physics allowing swinging, pulling, and pushing interactions</task-row>
      <task-row>Simple level with platforms, gaps, and basic obstacles</task-row>
      <task-row>Level exit that requires both characters to reach</task-row>
      <task-row>Basic collision detection for characters and environment</task-row>
      <task-row>Win condition when both characters reach the exit</task-row>
    </plan-section>
    <plan-section><span slot="title">Later</span><span slot="about">Agent can work on these tasks after the initial version</span></plan-section>
  </plan-card></div>
  <review-prompt></review-prompt>`, `
  :host{flex:1;min-height:0;display:flex;flex-direction:column;align-items:center;background:#eaecee;padding-bottom:8px;overflow:hidden}
  workspace-header{align-self:stretch}
  .scroll{flex:1;min-height:0;width:100%;overflow:hidden;display:flex;flex-direction:column;align-items:center;justify-content:flex-end;padding-bottom:19px}`);

define('task-bar', `
  <div class="left"><button class="weather"><span class="pic"><app-icon name="cloud" size="30"></app-icon><em>9+</em></span><span class="txt">30°C<br><small>Mostly cloudy</small></span></button></div>
  <div class="mid"><button aria-label="Start"><app-icon name="start" size="30"></app-icon></button>
    <label><app-icon name="search" size="20"></app-icon><input aria-label="Search" placeholder="Search"><app-icon name="balloons" size="56"></app-icon></label>
    <button aria-label="Task view"><app-icon name="taskview" size="30"></app-icon></button><button aria-label="Copilot"><app-icon name="copilot" size="30"></app-icon></button>
    <button aria-label="Explorer"><app-icon name="folder" size="30"></app-icon></button><button aria-label="Edge"><app-icon name="edge" size="30"></app-icon></button>
    <button aria-label="Store"><app-icon name="store" size="30"></app-icon></button><button aria-label="Diamond"><app-icon name="diamond" size="30"></app-icon></button>
    <button aria-label="Help"><app-icon name="help" size="30"></app-icon></button><button aria-label="McAfee"><app-icon name="mcafee" size="30"></app-icon></button>
    <button aria-label="Outlook"><app-icon name="outlook" size="30"></app-icon></button><button class="run" aria-label="Chrome"><app-icon name="chrome" size="30"></app-icon></button></div>
  <div class="right"><button aria-label="Hidden icons"><app-icon name="trayUp" size="16"></app-icon></button><button class="lang">ENG<br>IN</button>
    <button class="net" aria-label="Quick settings"><app-icon name="wifi" size="22"></app-icon><app-icon name="volume" size="22"></app-icon><app-icon name="battery" size="22"></app-icon></button>
    <button class="clock">17:43<br>18-08-2025</button><button aria-label="Notifications"><app-icon name="bell" size="18"></app-icon></button></div>`, `
  :host{display:flex;align-items:center;height:60px;flex:none;border-top:1px solid #5a4340;color:#fff;font:15px/20px var(--ui);padding-bottom:2px;
    background:linear-gradient(90deg,#2f1a1b,#3c1717 17%,#461212 27%,#461212 84%,#3a1616 92%,#321718)}
  .left{flex:1;padding-left:25px}.weather{text-align:left;gap:9px}
  .pic{position:relative;padding-top:6px}.pic em{position:absolute;left:13px;top:-8px;width:20px;height:20px;border-radius:50%;background:#ff8f9c;color:#2b1113;font:normal 14px/20px var(--ui);text-align:center}
  small{font-size:15px;color:#cfc6c6}
  .mid{display:flex;align-items:center;gap:5px;margin-left:2px}.mid>button{width:50px;height:50px;border-radius:6px}
  label{width:275px;height:40px;border-radius:20px;background:#613535;border:1px solid #7c5656;display:flex;align-items:center;padding:0 8px 0 14px;color:#eee}
  input{flex:1;margin-left:12px;font:17px/24px var(--ui);color:#fff}input::placeholder{color:#dccfcf;opacity:1}
  .mid .run{background:#5a2a2a;border:1px solid #673939;position:relative}.run::after{content:"";position:absolute;left:14px;bottom:0;width:20px;height:4px;border-radius:2px;background:#4cc2ff}
  .right{flex:1;display:flex;align-items:center;justify-content:flex-end;padding-right:26px}
  .lang{margin:0 21px 0 24px}.net{gap:8px;margin-right:19px}.clock{text-align:right;margin-right:10px}`);

define('desktop-screen', `<tab-strip></tab-strip><tool-bar></tool-bar><workspace-page></workspace-page><task-bar></task-bar>`,
  `:host{display:flex;flex-direction:column;height:100vh}tab-strip,tool-bar{flex:none}`);
</script>
</body>
</html>
